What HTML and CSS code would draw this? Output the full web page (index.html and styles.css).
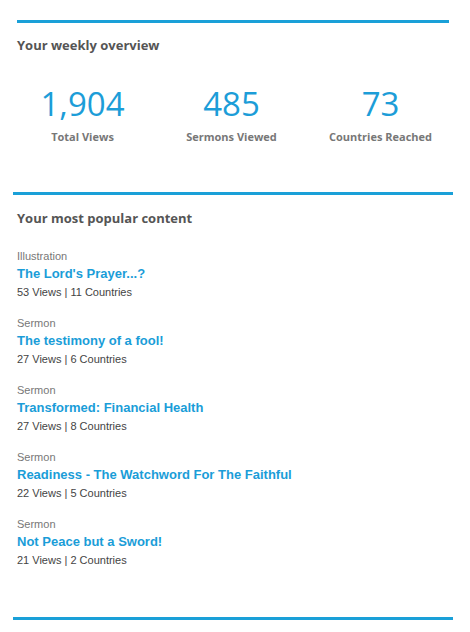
FILE: index.html
```html
<!DOCTYPE html>
<html>
<head>
<meta charset="utf-8">
<link rel="stylesheet" href="styles.css">
</head>
<body>
<div class="page">
  <section class="card card-overview">
    <h2 class="card-title">Your weekly overview</h2>
    <div class="stats">
      <div class="stat">
        <div class="stat-value">1,904</div>
        <div class="stat-label">Total Views</div>
      </div>
      <div class="stat">
        <div class="stat-value">485</div>
        <div class="stat-label">Sermons Viewed</div>
      </div>
      <div class="stat">
        <div class="stat-value">73</div>
        <div class="stat-label">Countries Reached</div>
      </div>
    </div>
  </section>

  <section class="card card-popular">
    <h2 class="card-title">Your most popular content</h2>
    <ul class="items">
      <li class="item">
        <div class="item-type">Illustration</div>
        <a class="item-title" href="#">The Lord's Prayer...?</a>
        <div class="item-meta">53 Views | 11 Countries</div>
      </li>
      <li class="item">
        <div class="item-type">Sermon</div>
        <a class="item-title" href="#">The testimony of a fool!</a>
        <div class="item-meta">27 Views | 6 Countries</div>
      </li>
      <li class="item">
        <div class="item-type">Sermon</div>
        <a class="item-title" href="#">Transformed: Financial Health</a>
        <div class="item-meta">27 Views | 8 Countries</div>
      </li>
      <li class="item">
        <div class="item-type">Sermon</div>
        <a class="item-title" href="#">Readiness - The Watchword For The Faithful</a>
        <div class="item-meta">22 Views | 5 Countries</div>
      </li>
      <li class="item">
        <div class="item-type">Sermon</div>
        <a class="item-title" href="#">Not Peace but a Sword!</a>
        <div class="item-meta">21 Views | 2 Countries</div>
      </li>
    </ul>
  </section>

  <section class="card card-next"></section>
</div>
</body>
</html>
```

FILE: styles.css
```css
html, body {
  margin: 0;
  padding: 0;
  background: #ffffff;
}

.page {
  display: flex;
  flex-direction: column;
  padding-top: 20px;
}

.card {
  border-top: 3px solid #1aa0d8;
  box-sizing: border-box;
}

.card-overview {
  margin-left: 17px;
  width: 432px;
  padding-top: 13px;
  height: 172px;
}

.card-popular {
  margin-left: 13px;
  width: 440px;
  padding-top: 14px;
  padding-left: 4px;
  height: 425px;
}

.card-next {
  margin-left: 13px;
  width: 440px;
  height: 15px;
}

.card-title {
  margin: 0;
  font-family: "Open Sans", sans-serif;
  font-weight: 700;
  font-size: 13px;
  line-height: 18px;
  color: #555555;
}

.stats {
  display: grid;
  grid-template-columns: repeat(3, 149px);
  margin-left: -9px;
  margin-top: 31px;
}

.stat {
  display: flex;
  flex-direction: column;
  align-items: center;
}

.stat-value {
  font-family: "Open Sans", sans-serif;
  font-weight: 400;
  font-size: 33px;
  line-height: 38px;
  color: #1c9dd8;
}

.stat-label {
  font-family: "Open Sans", sans-serif;
  font-weight: 700;
  font-size: 11px;
  line-height: 16px;
  margin-top: 6px;
  color: #777777;
}

.items {
  list-style: none;
  margin: 20px 0 0;
  padding: 0;
  display: flex;
  flex-direction: column;
  gap: 13px;
}

.item {
  display: flex;
  flex-direction: column;
}

.item-type {
  font-family: "Liberation Sans", Arial, sans-serif;
  font-size: 11px;
  line-height: 18px;
  color: #777777;
}

.item-title {
  font-family: "Liberation Sans", Arial, sans-serif;
  font-weight: 700;
  font-size: 13px;
  line-height: 18px;
  color: #1a9dd8;
  text-decoration: none;
}

.item-meta {
  font-family: "Liberation Sans", Arial, sans-serif;
  font-size: 11px;
  line-height: 18px;
  color: #444444;
}
```
